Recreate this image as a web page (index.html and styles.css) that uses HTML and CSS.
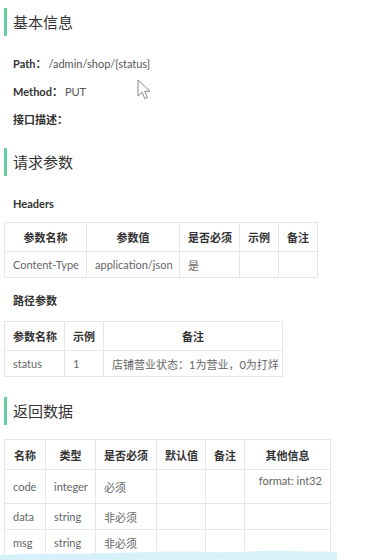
FILE: index.html
```html
<!DOCTYPE html>
<html lang="zh-CN">
<head>
    <meta charset="UTF-8">
    <meta name="viewport" content="width=device-width, initial-scale=1.0">
    <title>修改店铺营业状态</title>
    <link rel="stylesheet" href="styles.css">
</head>
<body>

<div class="doc">
    <!-- 基本信息 -->
    <h2 class="section-title">基本信息</h2>
    <div class="info">
        <p><b>Path：</b><span>/admin/shop/{status}</span></p>
        <p><b>Method：</b><span>PUT</span></p>
        <p><b>接口描述：</b></p>
    </div>

    <!-- 请求参数 -->
    <h2 class="section-title">请求参数</h2>
    <h3 class="sub-title">Headers</h3>
    <table class="params headers">
        <colgroup>
            <col class="c82"><col class="c93"><col class="c60"><col class="c39"><col class="c39">
        </colgroup>
        <tr class="head">
            <th>参数名称</th>
            <th>参数值</th>
            <th>是否必须</th>
            <th>示例</th>
            <th>备注</th>
        </tr>
        <tr>
            <td>Content-Type</td>
            <td>application/json</td>
            <td>是</td>
            <td></td>
            <td></td>
        </tr>
    </table>

    <h3 class="sub-title path-title">路径参数</h3>
    <table class="params path">
        <colgroup>
            <col class="c60"><col class="c39"><col class="c179">
        </colgroup>
        <tr class="head">
            <th>参数名称</th>
            <th>示例</th>
            <th>备注</th>
        </tr>
        <tr>
            <td>status</td>
            <td>1</td>
            <td>店铺营业状态：1为营业，0为打烊</td>
        </tr>
    </table>

    <!-- 返回数据 -->
    <h2 class="section-title">返回数据</h2>
    <table class="params result">
        <colgroup>
            <col class="c41"><col class="c50"><col class="c61"><col class="c49"><col class="c39"><col class="c86">
        </colgroup>
        <tr class="head">
            <th>名称</th>
            <th>类型</th>
            <th>是否必须</th>
            <th>默认值</th>
            <th>备注</th>
            <th>其他信息</th>
        </tr>
        <tr class="tall">
            <td>code</td>
            <td>integer</td>
            <td>必须</td>
            <td></td>
            <td></td>
            <td class="extra">format: int32</td>
        </tr>
        <tr>
            <td>data</td>
            <td>string</td>
            <td>非必须</td>
            <td></td>
            <td></td>
            <td></td>
        </tr>
        <tr>
            <td>msg</td>
            <td>string</td>
            <td>非必须</td>
            <td></td>
            <td></td>
            <td></td>
        </tr>
    </table>
</div>

<!-- mouse pointer -->
<svg class="pointer" width="15" height="21" viewBox="0 0 15 21">
    <path d="M1 1 L1 17 L5 13.2 L7.8 19.6 L10.4 18.5 L7.7 12.3 L13 12.3 Z" fill="#fff" stroke="#8a8a8a" stroke-width="1" stroke-linejoin="round"/>
</svg>

<!-- selection highlight at the bottom -->
<svg class="wave" width="340" height="14" viewBox="0 0 340 14">
    <path d="M0 9 C40 7 70 8 110 7 C150 6 180 5 210 6 C240 7 260 4 290 5 C310 6 325 5 337 6 L337 14 L0 14 Z" fill="#d2effa" fill-opacity="0.9"/>
</svg>

</body>
</html>
```

FILE: styles.css
```css
body {
    margin: 0;
    font-family: Lato, "Noto Sans CJK SC", sans-serif;
    font-size: 11px;
    color: #555;
    background-color: #fff;
    position: relative;
    height: 560px;
    overflow: hidden;
}
.doc {
    padding: 8px 0 0 4px;
}
.section-title {
    margin: 0;
    height: 28px;
    line-height: 28px;
    padding-left: 6px;
    border-left: 3px solid #62d09f;
    font-size: 15px;
    font-weight: normal;
    color: #333;
}
.info {
    padding: 18px 0 0 9px;
    margin-bottom: 18px;
}
.info p {
    margin: 0 0 8px;
    line-height: 20px;
}
.info b {
    color: #333;
}
.info span {
    margin-left: 2px;
}
.sub-title {
    margin: 18px 0 8px 9px;
    line-height: 20px;
    font-size: 11px;
    color: #333;
}
.path-title {
    margin: 13px 0 10px 9px;
}
.params {
    border-collapse: collapse;
    table-layout: fixed;
    margin-bottom: 20px;
}
.params tr {
    height: 26px;
}
.params tr.head {
    height: 29px;
}
.params th,
.params td {
    border: 1px solid #e6e6e6;
    padding: 0 8px;
    white-space: nowrap;
    overflow: hidden;
}
.params th {
    color: #333;
    font-weight: bold;
    text-align: center;
}
.params td {
    color: #666;
    text-align: left;
}
.headers {
    width: 313px;
    margin-bottom: 0;
}
.path {
    width: 278px;
}
.result {
    width: 326px;
    margin-top: 14px;
}
.result tr.head {
    height: 30px;
}
.result tr.tall {
    height: 34px;
}
.result td.extra {
    vertical-align: top;
    padding-top: 4px;
    text-align: right;
}
.c39 { width: 39px; }
.c41 { width: 41px; }
.c49 { width: 49px; }
.c50 { width: 50px; }
.c60 { width: 60px; }
.c61 { width: 61px; }
.c82 { width: 82px; }
.c86 { width: 86px; }
.c93 { width: 93px; }
.c179 { width: 179px; }
.pointer {
    position: absolute;
    left: 137px;
    top: 79px;
}
.wave {
    position: absolute;
    left: 0;
    bottom: 0;
}
```
